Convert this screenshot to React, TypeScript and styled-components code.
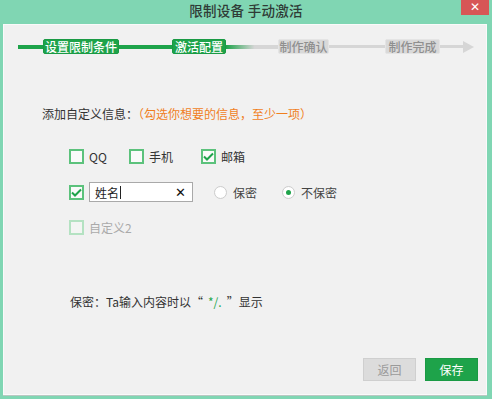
import styled, { createGlobalStyle } from "styled-components";

const GlobalStyle = createGlobalStyle`
  html, body {
    margin: 0;
    padding: 0;
    background: #80d6b3;
  }
  * { box-sizing: border-box; }
`;

const FONT = `"Noto Sans CJK SC", "Noto Sans", sans-serif`;

const Window = styled.div`
  width: 492px;
  height: 399px;
  background: #80d6b3;
  display: flex;
  flex-direction: column;
  position: relative;
  font-family: ${FONT};
  color: #333;
`;

const TitleBar = styled.div`
  height: 24px;
  line-height: 21px;
  text-align: center;
  font-size: 13.5px;
  font-weight: 500;
  color: #2f3b36;
  letter-spacing: 0.3px;
`;

const CloseButton = styled.div`
  position: absolute;
  top: 0;
  right: 3px;
  width: 28px;
  height: 15px;
  background: #d75656;
  color: #fff;
  font-size: 12px;
  font-weight: bold;
  line-height: 15px;
  text-align: center;
  font-family: "DejaVu Sans", sans-serif;
`;

const Panel = styled.div`
  margin: 0 5px 0 3px;
  height: 371px;
  background: #f1f1f1;
  border: 1px solid #fafafa;
  box-shadow: 0 1px 0 #b9c8c2;
  display: flex;
  flex-direction: column;
`;

const Steps = styled.div`
  display: flex;
  align-items: center;
  height: 15px;
  margin: 14px 0 0 14px;
`;

const Seg = styled.div<{ $w: number; $kind: "done" | "fade" | "todo" }>`
  width: ${({ $w }) => $w}px;
  height: ${({ $kind }) => ($kind === "todo" ? 3 : 4)}px;
  background: ${({ $kind }) =>
    $kind === "done"
      ? "#1ea34a"
      : $kind === "fade"
      ? "linear-gradient(to right, #1ea34a 0%, #d6d6d6 55%, #d6d6d6 100%)"
      : "#d6d6d6"};
`;

const Pill = styled.div<{ $w: number; $active: boolean }>`
  width: ${({ $w }) => $w}px;
  height: 15px;
  font-size: 12px;
  font-weight: 500;
  text-align: center;
  border-radius: 2px;
  background: ${({ $active }) => ($active ? "#1ea34a" : "#d9d9d9")};
  color: ${({ $active }) => ($active ? "#fff" : "#8f8f8f")};
  border: 1px solid ${({ $active }) => ($active ? "#1a9a44" : "#e4e4e4")};
  line-height: 13px;
`;

const ArrowHead = styled.div`
  width: 0;
  height: 0;
  border-left: 11px solid #d6d6d6;
  border-top: 6px solid transparent;
  border-bottom: 6px solid transparent;
`;

const Heading = styled.div`
  margin: 52px 0 0 38px;
  font-size: 12px;
  line-height: 16px;
  color: #333;
`;

const Hint = styled.span`
  color: #f07f1e;
`;

const Row = styled.div<{ $gap: number }>`
  display: flex;
  align-items: center;
  height: 20px;
  margin: ${({ $gap }) => $gap}px 0 0 65px;
`;

const Option = styled.label<{ $w?: number; $disabled?: boolean }>`
  display: flex;
  align-items: center;
  gap: 5px;
  width: ${({ $w }) => ($w ? `${$w}px` : "auto")};
  font-size: 12px;
  color: ${({ $disabled }) => ($disabled ? "#aaa" : "#333")};
`;

const Box = styled.span<{ $disabled?: boolean }>`
  width: 15px;
  height: 15px;
  flex: none;
  border: 2px solid ${({ $disabled }) => ($disabled ? "#b4e2c2" : "#5cc27c")};
  background: ${({ $disabled }) => ($disabled ? "#f3f5f3" : "#fafafa")};
  display: flex;
  align-items: center;
  justify-content: center;
`;

const Input = styled.div`
  width: 104px;
  height: 20px;
  margin-left: 5px;
  background: #fff;
  border: 1px solid #a9a9a9;
  display: flex;
  align-items: center;
  padding: 0 6px 0 5px;
  font-size: 12px;
  color: #222;
`;

const Caret = styled.span`
  width: 1px;
  height: 13px;
  background: #222;
  margin-left: 1px;
`;

const Clear = styled.span`
  margin-left: auto;
  font-family: "DejaVu Sans", sans-serif;
  font-weight: bold;
  font-size: 13px;
  color: #111;
`;

const RadioOption = styled.label<{ $ml: number }>`
  display: flex;
  align-items: center;
  gap: 6px;
  margin-left: ${({ $ml }) => $ml}px;
  font-size: 12px;
  color: #444;
`;

const Radio = styled.span<{ $checked?: boolean }>`
  width: 13px;
  height: 13px;
  border-radius: 50%;
  border: 1px solid #cdcdcd;
  background: radial-gradient(circle, #fff 60%, #f1f1f1 100%);
  display: flex;
  align-items: center;
  justify-content: center;
  &::after {
    content: "";
    display: ${({ $checked }) => ($checked ? "block" : "none")};
    width: 5px;
    height: 5px;
    border-radius: 50%;
    background: #1ea34a;
  }
`;

const Note = styled.div`
  margin: 57px 0 0 66px;
  font-size: 12px;
  line-height: 16px;
  color: #333;
`;

const Mask = styled.span`
  color: #26a84f;
  margin: 0 5px;
`;

const Footer = styled.div`
  display: flex;
  justify-content: flex-end;
  gap: 9px;
  margin: 48px 8px 0 0;
`;

const Button = styled.div<{ $primary?: boolean }>`
  width: 53px;
  height: 23px;
  line-height: 21px;
  text-align: center;
  font-size: 12px;
  background: ${({ $primary }) => ($primary ? "#1ea34a" : "#dcdcdc")};
  color: ${({ $primary }) => ($primary ? "#fff" : "#9a9a9a")};
  border: 1px solid ${({ $primary }) => ($primary ? "#1a9a44" : "#cfcfcf")};
`;

function Check() {
  return (
    <svg width="11" height="9" viewBox="0 0 11 9">
      <path d="M1 4.5 L4 7.5 L10 1.5" fill="none" stroke="#1ea34a" strokeWidth="2" />
    </svg>
  );
}

export default function App() {
  return (
    <>
      <GlobalStyle />
      <Window>
        <TitleBar>限制设备 手动激活</TitleBar>
        <CloseButton>✕</CloseButton>
        <Panel>
          <Steps>
            <Seg $w={25} $kind="done" />
            <Pill $w={76} $active>设置限制条件</Pill>
            <Seg $w={53} $kind="done" />
            <Pill $w={54} $active>激活配置</Pill>
            <Seg $w={52} $kind="fade" />
            <Pill $w={51} $active={false}>制作确认</Pill>
            <Seg $w={56} $kind="todo" />
            <Pill $w={55} $active={false}>制作完成</Pill>
            <Seg $w={23} $kind="todo" />
            <ArrowHead />
          </Steps>

          <Heading>
            添加自定义信息：<Hint>（勾选你想要的信息，至少一项）</Hint>
          </Heading>

          <Row $gap={24}>
            <Option $w={60}>
              <Box />
              QQ
            </Option>
            <Option $w={72}>
              <Box />
              手机
            </Option>
            <Option>
              <Box>
                <Check />
              </Box>
              邮箱
            </Option>
          </Row>

          <Row $gap={16}>
            <Box>
              <Check />
            </Box>
            <Input>
              姓名
              <Caret />
              <Clear>✕</Clear>
            </Input>
            <RadioOption $ml={21}>
              <Radio />
              保密
            </RadioOption>
            <RadioOption $ml={25}>
              <Radio $checked />
              不保密
            </RadioOption>
          </Row>

          <Row $gap={15}>
            <Option $disabled>
              <Box $disabled />
              自定义2
            </Option>
          </Row>

          <Note>
            保密：Ta输入内容时以“<Mask>*/.</Mask>”显示
          </Note>

          <Footer>
            <Button>返回</Button>
            <Button $primary>保存</Button>
          </Footer>
        </Panel>
      </Window>
    </>
  );
}
